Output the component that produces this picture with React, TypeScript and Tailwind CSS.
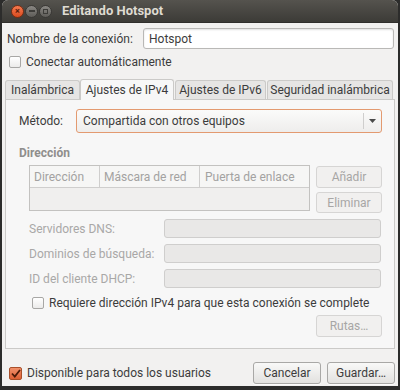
import React from "react";

function Btn({ label, disabled, className = "" }: { label: string; disabled?: boolean; className?: string }) {
  return (
    <div
      className={
        "shrink-0 whitespace-nowrap flex items-center justify-center rounded-[3px] border text-[12px] " +
        (disabled
          ? "border-[#d6d5d4] bg-[#f1f0ef] text-[#a7a6a5] "
          : "border-[#a9a8a6] bg-gradient-to-b from-[#f9f9f8] to-[#e2e1df] text-[#3c3c3c] shadow-[0_1px_0_rgba(255,255,255,0.8)] ") +
        className
      }
    >
      {label}
    </div>
  );
}

function DisabledRow({ label }: { label: string }) {
  return (
    <div className="flex h-[19px] items-center">
      <div className="shrink-0 w-[158px] pl-[23px] text-[12px] text-[#a9a8a7]">{label}</div>
      <div className="shrink-0 h-[19px] w-[217px] rounded-[3px] border border-[#cfcecd] bg-[#e9e8e7]" />
    </div>
  );
}

function Check() {
  return <div className="shrink-0 w-[12px] h-[12px] rounded-[2px] border border-[#a8a7a5] bg-gradient-to-b from-white to-[#ecebea]" />;
}

export default function App() {
  return (
    <div className="w-[400px] h-[390px] bg-[#2c2c2b] overflow-hidden whitespace-nowrap font-[Roboto,sans-serif] text-[12px] text-[#3c3c3c]">
      <div className="ml-[2px] w-[396px] h-[386px] bg-[#f2f1f0] rounded-t-[6px] overflow-hidden flex flex-col">
        {/* title bar */}
        <div className="shrink-0 h-[23px] flex items-center bg-gradient-to-b from-[#55534e] to-[#3c3b37] border-b border-[#302f2c]">
          <div className="ml-[9px] w-[13px] h-[13px] rounded-full bg-gradient-to-b from-[#f57a4f] to-[#d94a1d] border border-[#7a2e14] flex items-center justify-center text-[9px] leading-none text-[#5a200c] font-bold">×</div>
          <div className="ml-[1px] w-[13px] h-[13px] rounded-full bg-gradient-to-b from-[#8a8884] to-[#5e5c58] border border-[#3a3936] flex items-center justify-center">
            <div className="w-[6px] h-[2px] bg-[#3d3c39]" />
          </div>
          <div className="ml-[1px] w-[13px] h-[13px] rounded-full bg-gradient-to-b from-[#8a8884] to-[#5e5c58] border border-[#3a3936] flex items-center justify-center">
            <div className="w-[5px] h-[5px] border border-[#3d3c39]" />
          </div>
          <div className="ml-[10px] text-[13px] font-bold text-[#dfdbd2]">Editando Hotspot</div>
        </div>

        {/* name row */}
        <div className="mt-[5px] flex items-center h-[21px]">
          <div className="shrink-0 w-[141px] pl-[5px]">Nombre de la conexión:</div>
          <div className="shrink-0 h-[21px] w-[251px] rounded-[3px] border border-[#b9b8b6] bg-white shadow-[inset_0_1px_2px_rgba(0,0,0,0.12)] flex items-center pl-[5px]">
            Hotspot
          </div>
        </div>

        {/* autoconnect */}
        <div className="mt-[6px] flex items-center h-[14px] pl-[7px]">
          <Check />
          <div className="ml-[5px]">Conectar automáticamente</div>
        </div>

        {/* tabs */}
        <div className="mt-[9px] ml-[3px] flex items-end h-[21px]">
          <div className="shrink-0 h-[19px] w-[75px] border border-[#cbcac8] border-b-0 rounded-t-[3px] bg-[#e6e5e4] flex items-center justify-center">Inalámbrica</div>
          <div className="shrink-0 h-[21px] w-[94px] border border-[#cbcac8] border-b-0 rounded-t-[3px] bg-[#f7f7f7] flex items-center justify-center relative z-10 -mb-[1px]">Ajustes de IPv4</div>
          <div className="shrink-0 ml-[1px] h-[19px] w-[91px] border border-[#cbcac8] border-b-0 rounded-t-[3px] bg-[#e6e5e4] flex items-center justify-center">Ajustes de IPv6</div>
          <div className="shrink-0 ml-[1px] h-[19px] w-[126px] border border-[#cbcac8] border-b-0 rounded-t-[3px] bg-[#e6e5e4] flex items-center justify-center">Seguridad inalámbrica</div>
        </div>

        {/* panel */}
        <div className="shrink-0 ml-[3px] w-[390px] h-[250px] border border-[#cbcac8] bg-[#f7f7f7] flex flex-col">
          <div className="mt-[9px] flex items-center h-[24px]">
            <div className="shrink-0 w-[70px] pl-[13px]">Método:</div>
            <div className="shrink-0 h-[24px] w-[306px] rounded-[3px] border border-[#e39a70] bg-gradient-to-b from-[#fbfbfa] to-[#eeedec] flex items-center">
              <div className="flex-1 pl-[6px]">Compartida con otros equipos</div>
              <div className="w-[1px] h-[16px] bg-[#cfcecd]" />
              <div className="w-[17px] flex justify-center">
                <svg width="7" height="4" viewBox="0 0 7 4"><path d="M0 0h7L3.5 4z" fill="#4a4a4a" /></svg>
              </div>
            </div>
          </div>

          <div className="mt-[12px] pl-[13px] font-bold text-[#8f8e8c] h-[16px] leading-[16px]">Dirección</div>

          <div className="mt-[4px] flex">
            <div className="shrink-0 ml-[23px] w-[281px] h-[46px] border border-[#c3c2c0] bg-[#f0efee] flex flex-col">
              <div className="h-[22px] flex items-center text-[#a3a2a1] border-b border-[#cfcecd] bg-[#f6f6f5]">
                <div className="shrink-0 w-[70px] pl-[4px] h-full flex items-center border-r border-[#cfcecd]">Dirección</div>
                <div className="shrink-0 w-[100px] pl-[4px] h-full flex items-center border-r border-[#cfcecd]">Máscara de red</div>
                <div className="flex-1 pl-[5px] h-full flex items-center">Puerta de enlace</div>
              </div>
            </div>
            <div className="ml-[6px] flex flex-col gap-[4px] mt-[1px]">
              <Btn label="Añadir" disabled className="w-[66px] h-[22px]" />
              <Btn label="Eliminar" disabled className="w-[66px] h-[21px]" />
            </div>
          </div>

          <div className="mt-[6px] flex flex-col gap-[6px]">
            <DisabledRow label="Servidores DNS:" />
            <DisabledRow label="Dominios de búsqueda:" />
            <DisabledRow label="ID del cliente DHCP:" />
          </div>

          <div className="mt-[8px] flex items-center h-[14px] pl-[26px]">
            <Check />
            <div className="ml-[5px]">Requiere dirección IPv4 para que esta conexión se complete</div>
          </div>

          <div className="mt-[5px] flex">
            <Btn label="Rutas…" disabled className="ml-[310px] w-[66px] h-[22px]" />
          </div>
        </div>

        {/* bottom */}
        <div className="mt-[13px] flex items-center h-[22px]">
          <div className="shrink-0 ml-[7px] w-[13px] h-[13px] rounded-[2px] border border-[#a9502a] bg-gradient-to-b from-[#f0906a] to-[#dd5f33] flex items-center justify-center">
            <svg width="10" height="9" viewBox="0 0 10 9"><path d="M1 4.5L3.8 7.5L9 1" stroke="#4a1a08" strokeWidth="1.8" fill="none" /></svg>
          </div>
          <div className="ml-[5px] flex-1">Disponible para todos los usuarios</div>
          <Btn label="Cancelar" className="w-[68px] h-[22px]" />
          <Btn label="Guardar…" className="ml-[6px] mr-[3px] w-[68px] h-[22px]" />
        </div>
      </div>
    </div>
  );
}
